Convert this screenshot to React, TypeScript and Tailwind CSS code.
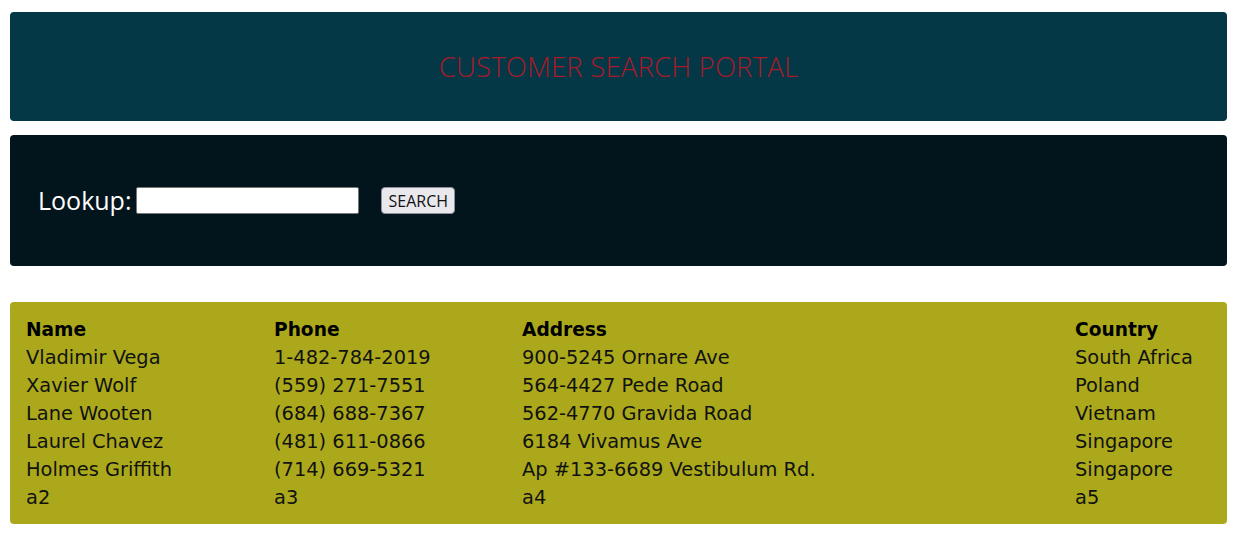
export default function App() {
  const rows = [
    { name: "Vladimir Vega", phone: "1-482-784-2019", address: "900-5245 Ornare Ave", country: "South Africa" },
    { name: "Xavier Wolf", phone: "(559) 271-7551", address: "564-4427 Pede Road", country: "Poland" },
    { name: "Lane Wooten", phone: "(684) 688-7367", address: "562-4770 Gravida Road", country: "Vietnam" },
    { name: "Laurel Chavez", phone: "(481) 611-0866", address: "6184 Vivamus Ave", country: "Singapore" },
    { name: "Holmes Griffith", phone: "(714) 669-5321", address: "Ap #133-6689 Vestibulum Rd.", country: "Singapore" },
    { name: "a2", phone: "a3", address: "a4", country: "a5" },
  ];

  return (
    <div className="min-h-[538px] bg-white px-[10px] pt-[12px] font-['DejaVu_Sans',sans-serif]">
      <div className="h-[109px] rounded bg-[#053847] flex items-center justify-center">
        <h1 className="font-['Open_Sans',sans-serif] font-light text-[27.5px] text-[#a81a2a] tracking-[0.2px]">
          CUSTOMER SEARCH PORTAL
        </h1>
      </div>

      <div className="mt-[14px] h-[131px] rounded bg-[#02151d] flex items-center pl-[28px]">
        <label className="font-['Open_Sans',sans-serif] text-[25px] text-white mr-[5px]">Lookup:</label>
        <input
          type="text"
          className="w-[223px] h-[27px] bg-white border border-[#767676] rounded-[2px]"
        />
        <button className="ml-[22px] h-[27px] px-[6px] rounded-[4px] bg-[#e9e9ed] border border-[#8f8f9d] text-[16px] text-[#111] font-['Open_Sans',sans-serif]">
          SEARCH
        </button>
      </div>

      <div className="mt-[36px] rounded bg-[#aba91b] pl-[16px] pr-[16px] pt-[14px] pb-[12px] text-[19.4px] leading-[28px] text-[#111]">
        <div className="grid grid-cols-[248px_248px_553px_1fr]">
          <div className="font-bold text-black text-[18.6px]">Name</div>
          <div className="font-bold text-black text-[18.6px]">Phone</div>
          <div className="font-bold text-black text-[18.6px]">Address</div>
          <div className="font-bold text-black text-[18.6px]">Country</div>
          {rows.map((r, i) => (
            <div key={i} className="contents">
              <div>{r.name}</div>
              <div>{r.phone}</div>
              <div>{r.address}</div>
              <div>{r.country}</div>
            </div>
          ))}
        </div>
      </div>
    </div>
  );
}
